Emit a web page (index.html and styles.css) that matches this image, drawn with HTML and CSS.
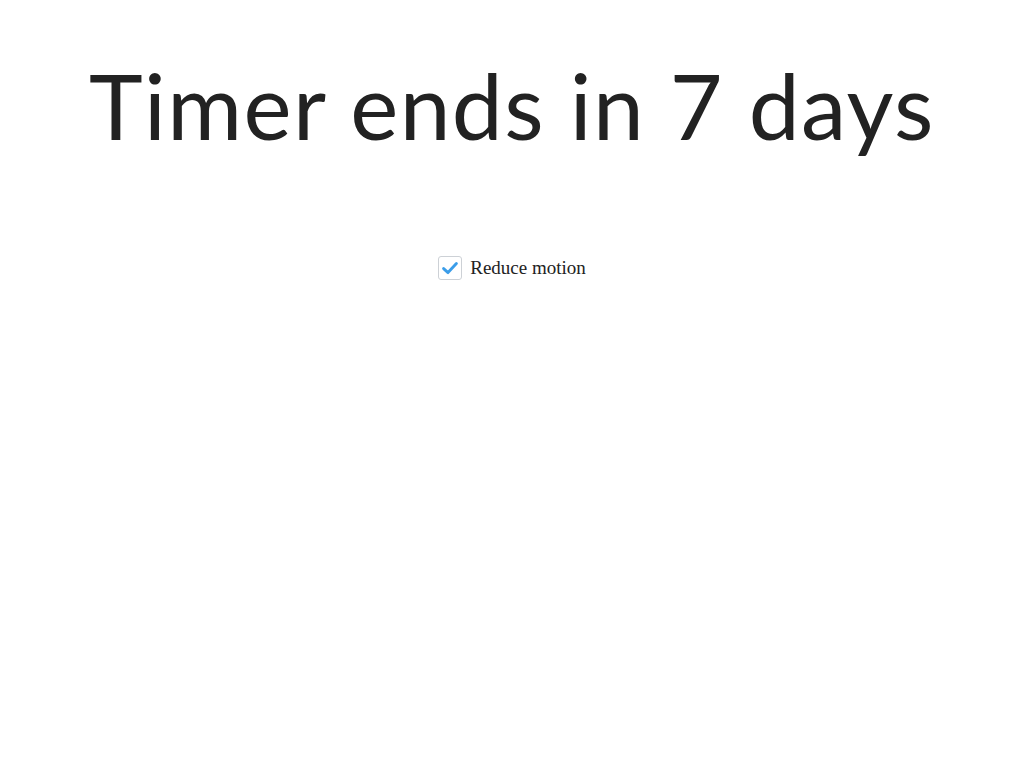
FILE: index.html
```html
<!DOCTYPE html>
<html lang="en">
<head>
<meta charset="utf-8">
<title>Timer</title>
<link rel="stylesheet" href="styles.css">
</head>
<body>
<main class="page">
  <h1 class="title">Timer ends in 7 days</h1>
  <label class="option">
    <span class="box">
      <svg viewBox="0 0 24 24" width="24" height="24" aria-hidden="true">
        <path d="M5.6 12.6 L10 16.6 L18.4 7.6" fill="none" stroke="#3b9de9" stroke-width="2.9" stroke-linecap="round" stroke-linejoin="round"/>
      </svg>
    </span>
    <span class="label-text">Reduce motion</span>
  </label>
</main>
</body>
</html>
```

FILE: styles.css
```css
html, body {
  margin: 0;
  padding: 0;
  background: #ffffff;
}
.page {
  display: flex;
  flex-direction: column;
  align-items: center;
}
.title {
  margin: 0;
  padding-top: 50px;
  font-family: "Lato", sans-serif;
  font-weight: 400;
  font-size: 91px;
  line-height: 110px;
  letter-spacing: 1.4px;
  color: #222222;
  white-space: nowrap;
}
.option {
  margin-top: 96px;
  display: flex;
  align-items: center;
  gap: 8px;
}
.box {
  box-sizing: border-box;
  width: 24px;
  height: 24px;
  border: 1px solid #cdd1d6;
  border-radius: 3px;
  display: flex;
  align-items: center;
  justify-content: center;
}
.box svg {
  display: block;
  flex: none;
}
.label-text {
  font-family: "Liberation Serif", serif;
  font-size: 19px;
  color: #222222;
}
```
